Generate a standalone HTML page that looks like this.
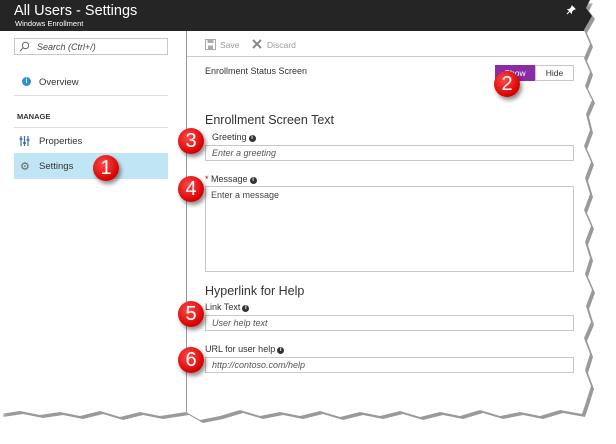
<!DOCTYPE html>
<html><head><meta charset="utf-8"><style>
*{margin:0;padding:0;box-sizing:border-box}
body{width:616px;height:444px;background:#fff;font-family:"Liberation Sans",sans-serif;position:relative;overflow:hidden;color:#333}
.page,.shadow{clip-path:polygon(0 0,590px 0,586px 8px,592px 16px,584px 30px,590px 44px,584px 58px,590px 72px,585px 86px,592px 100px,586px 114px,590px 130px,584px 146px,591px 162px,585px 178px,590px 194px,584px 210px,591px 226px,585px 242px,590px 258px,585px 274px,592px 290px,586px 306px,591px 322px,584px 338px,590px 354px,585px 370px,591px 386px,586px 402px,582px 414px,560px 410px,540px 416px,520px 412px,500px 416px,480px 410px,460px 416px,440px 412px,420px 417px,400px 411px,380px 416px,360px 412px,340px 417px,320px 411px,300px 416px,280px 412px,260px 416px,240px 410px,220px 416px,200px 420px,186px 412px,160px 416px,140px 412px,120px 417px,100px 411px,80px 416px,60px 412px,40px 415px,20px 411px,0 414px)}
.page{position:absolute;left:0;top:0;width:600px;height:428px;background:#fff}
.shadow{position:absolute;left:3px;top:3px;width:600px;height:428px;background:#9a9a9a;filter:blur(2px)}
.hdr{position:absolute;left:0;top:0;width:600px;height:31px;background:#252525;color:#fff}
.a{position:absolute;white-space:nowrap}
.box{position:absolute;border:1px solid #c8c8c8;background:#fff}
.badge{position:absolute;width:26px;height:26px;border-radius:50%;background:radial-gradient(circle at 40% 35%,#ff4a4a,#d60000 70%,#a00);color:#fff;font-size:20px;text-align:center;line-height:26px;box-shadow:2px 3px 4px rgba(0,0,0,.45)}
.lbl{font-size:9px;color:#333}
.i{display:inline-block;width:7px;height:7px;border-radius:50%;background:#333;color:#fff;font-size:6px;line-height:7px;text-align:center;font-weight:bold;vertical-align:1px;margin-left:2px}
.ph{font-size:9px;font-style:italic;color:#555}
</style></head><body>
<div class="shadow"></div>
<div class="page">
<div class="hdr">
<div class="a" style="left:14px;top:3px;font-size:14.5px">All Users - Settings</div>
<div class="a" style="left:15px;top:19px;font-size:7.5px">Windows Enrollment</div>
<svg class="a" style="left:566px;top:5px" width="10" height="10" viewBox="0 0 10 10"><path d="M6 1 L9 4 L7.5 4.5 L5.5 6.5 L5.5 8 L2 4.5 L3.5 4.5 L5.5 2.5Z M3.5 6.5 L1 9" fill="#fff" stroke="#fff" stroke-width="1"/></svg>
</div>
<div class="a" style="left:186px;top:31px;width:1px;height:385px;background:#999"></div>
<div class="box" style="left:14px;top:38px;width:154px;height:17px"></div>
<svg class="a" style="left:19px;top:41px" width="11" height="11" viewBox="0 0 11 11"><circle cx="6.5" cy="4.5" r="3.2" fill="none" stroke="#666"/><path d="M4.2 6.8 L1 10" stroke="#666"/></svg>
<div class="a ph" style="left:37px;top:42px;color:#444">Search (Ctrl+/)</div>
<div class="a" style="left:22px;top:77px;width:9px;height:9px;border-radius:50%;background:#2e8fd0;color:#fff;font-size:7px;text-align:center;line-height:9px;font-weight:bold">i</div>
<div class="a" style="left:39px;top:77px;font-size:9.5px">Overview</div>
<div class="a" style="left:14px;top:95px;width:154px;height:1px;background:#ddd"></div>
<div class="a" style="left:17px;top:112px;font-size:7.5px;font-weight:bold;color:#333">MANAGE</div>
<div class="a" style="left:14px;top:127px;width:154px;height:1px;background:#ddd"></div>
<svg class="a" style="left:19px;top:135px" width="11" height="12" viewBox="0 0 11 12"><path d="M2 1V11M5.5 1V11M9 1V11" stroke="#3a6ea5" stroke-width="1.2"/><path d="M0.5 4H3.5M4 8H7M7.5 5H10.5" stroke="#3a6ea5" stroke-width="1.5"/></svg>
<div class="a" style="left:39px;top:136px;font-size:9.5px">Properties</div>
<div class="a" style="left:14px;top:153px;width:154px;height:26px;background:#c0e6f5"></div>
<div class="a" style="left:20px;top:160px;font-size:11px;color:#666">⚙</div>
<div class="a" style="left:39px;top:161px;font-size:9.5px">Settings</div>
<svg class="a" style="left:205px;top:39px" width="11" height="11" viewBox="0 0 11 11"><rect x="0.5" y="0.5" width="10" height="10" fill="none" stroke="#aaa"/><rect x="2.5" y="0.5" width="6" height="3.5" fill="#aaa"/><rect x="3" y="6.5" width="5" height="4" fill="#aaa"/></svg>
<div class="a" style="left:220px;top:40px;font-size:8.5px;color:#999">Save</div>
<svg class="a" style="left:252px;top:39px" width="10" height="10" viewBox="0 0 10 10"><path d="M1 1L9 9M9 1L1 9" stroke="#888" stroke-width="2"/></svg>
<div class="a" style="left:267px;top:40px;font-size:8.5px;color:#999">Discard</div>
<div class="a" style="left:187px;top:56px;width:400px;height:1px;background:#ccc"></div>
<div class="a" style="left:205px;top:66px;font-size:9px">Enrollment Status Screen</div>
<div class="a" style="left:495px;top:65px;width:40px;height:16px;background:#8a2da5;color:#fff;font-size:8.5px;text-align:center;line-height:16px">Show</div>
<div class="box" style="left:535px;top:65px;width:39px;height:16px;font-size:8.5px;text-align:center;line-height:14px">Hide</div>
<div class="a" style="left:205px;top:113px;font-size:12.5px">Enrollment Screen Text</div>
<div class="a lbl" style="left:212px;top:132px">Greeting<span class="i">i</span></div>
<div class="box" style="left:205px;top:145px;width:369px;height:16px"></div>
<div class="a ph" style="left:212px;top:148px">Enter a greeting</div>
<div class="a lbl" style="left:205px;top:174px"><span style="color:#d00">*</span> Message<span class="i">i</span></div>
<div class="box" style="left:205px;top:186px;width:369px;height:86px"></div>
<div class="a" style="left:211px;top:190px;font-size:9px;color:#444">Enter a message</div>
<div class="a" style="left:205px;top:284px;font-size:12.5px">Hyperlink for Help</div>
<div class="a lbl" style="left:205px;top:302px">Link Text<span class="i">i</span></div>
<div class="box" style="left:205px;top:315px;width:369px;height:16px"></div>
<div class="a ph" style="left:212px;top:318px">User help text</div>
<div class="a lbl" style="left:205px;top:344px">URL for user help<span class="i">i</span></div>
<div class="box" style="left:205px;top:357px;width:369px;height:16px"></div>
<div class="a ph" style="left:212px;top:360px">http://contoso.com/help</div>
<div class="badge" style="left:93px;top:155px">1</div>
<div class="badge" style="left:494px;top:71px">2</div>
<div class="badge" style="left:178px;top:128px">3</div>
<div class="badge" style="left:178px;top:176px">4</div>
<div class="badge" style="left:178px;top:301px">5</div>
<div class="badge" style="left:178px;top:347px">6</div>
</div>
</body></html>
